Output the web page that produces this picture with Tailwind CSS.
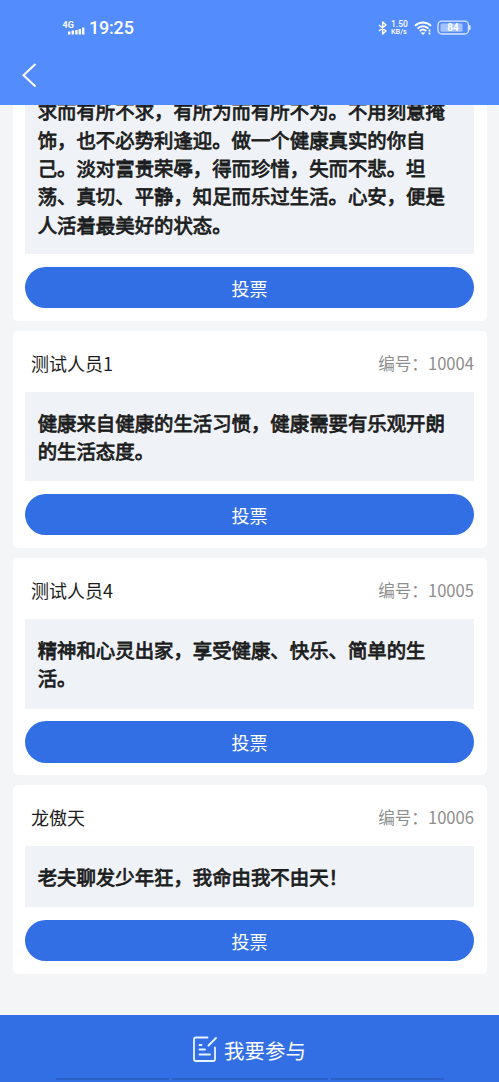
<!DOCTYPE html>
<html lang="zh-CN">
<head>
<meta charset="utf-8">
<meta name="viewport" content="width=device-width, initial-scale=1">
<title>投票</title>
<script src="https://cdn.jsdelivr.net/npm/@tailwindcss/browser@4"></script>
</head>
<body class="flex h-[1082px] w-[499px] flex-col overflow-hidden bg-[#f3f5f7] font-['Noto_Sans_CJK_SC',sans-serif] text-[#1b1d20]">
  <header class="flex h-[105px] shrink-0 flex-col bg-[#528cfd] text-white">
    <div class="flex h-[55px] items-center justify-between pl-[62px] pr-[28px]">
      <div class="flex items-center">
        <svg class="h-[18px] w-[24px]" viewBox="0 0 24 18" fill="#fff">
          <text x="0.500" y="8.500" font-family="Roboto, sans-serif" font-size="9" font-weight="700">4G</text>
          <rect x="6" y="12.500" width="2.400" height="3"/><rect x="9.600" y="11.500" width="2.400" height="4"/><rect x="13.200" y="11" width="2.400" height="4.500"/><rect x="16.600" y="10" width="2.400" height="5.500"/><rect x="20" y="8.500" width="2.400" height="7"/>
        </svg>
        <span class="ml-[3px] font-['Roboto',sans-serif] text-[18px] leading-[20px] font-medium tracking-[-0.200px]">19:25</span>
      </div>
      <div class="flex items-center">
        <svg class="h-[14px] w-[10px]" viewBox="0 0 10 14" fill="none" stroke="#fff" stroke-width="1.500" stroke-linejoin="round"><path d="M1 4l7 6-3.300 3V1L8 4 1 10"/></svg>
        <div class="ml-[3px] w-[18px] font-['Roboto',sans-serif] font-medium"><div class="text-[8.500px] leading-[8px]">1.50</div><div class="text-[7.300px] leading-[7px]">KB/s</div></div>
        <svg class="ml-[5px] h-[14px] w-[18px]" viewBox="0 0 18 14" fill="none" stroke="#fff" stroke-width="1.900"><path d="M1 4.800C5.500.3 12.500.3 17 4.800"/><path d="M3.500 7.600c3.200-3.100 7.800-3.100 11 0"/><path d="M5.700 10.100c2-1.900 4.600-1.900 6.600 0"/><path d="M6.500 11.500h5L9 14z" fill="#fff" stroke="none"/><path d="M15.500 8.500v2M15.500 11.500v2" stroke-width="1.800"/></svg>
        <svg class="ml-[5px] h-[15px] w-[34px]" viewBox="0 0 34 15"><rect x="1" y="1.200" width="30.500" height="12.800" rx="3.800" fill="none" stroke="#dbe8ff" stroke-width="1.300"/><rect x="3.500" y="3.500" width="22" height="8.200" rx="1.500" fill="#a3c3ff"/><path d="M32.800 5.200v4.600" stroke="#dbe8ff" stroke-width="1.600"/><text x="16" y="11.200" text-anchor="middle" font-family="Roboto, sans-serif" font-size="10" font-weight="700" fill="#fff">84</text></svg>
      </div>
    </div>
    <svg class="mt-[8px] ml-[22px] h-[25px] w-[15px]" viewBox="0 0 15 25" fill="none" stroke="#fff" stroke-width="2"><path d="M13.500 1L1.500 12.200l12 11.300"/></svg>
  </header>

  <main class="flex h-[910px] shrink-0 flex-col justify-end gap-[10px] overflow-hidden px-[12.500px] pb-[41.200px]">
    <section class="shrink-0 rounded-[5px] bg-white p-[12.500px]">
      <div class="bg-[#eff2f7] px-[12.700px] py-[15.500px] text-[19.400px] leading-[28.300px] font-normal [-webkit-text-stroke:0.800px_#1b1d20]">求而有所不求，有所为而有所不为。不用刻意掩<br>饰，也不必势利逢迎。做一个健康真实的你自<br>己。淡对富贵荣辱，得而珍惜，失而不悲。坦<br>荡、真切、平静，知足而乐过生活。心安，便是<br>人活着最美好的状态。</div>
      <button class="mt-[12.500px] block h-[41.500px] w-full rounded-full bg-[#326fe5] pt-[1px] text-[18px] text-white">投票</button>
    </section>
    <section class="shrink-0 rounded-[5px] bg-white px-[12.500px] pb-[12.500px]">
      <div class="flex h-[61px] items-center justify-between pt-[4px] pl-[6px]"><span class="text-[18px]">测试人员1</span><span class="text-[16.600px] text-[#8e8e8e]">编号：10004</span></div>
      <div class="bg-[#eff2f7] px-[12.700px] pt-[17px] pb-[16px] text-[19.400px] leading-[28.300px] font-normal [-webkit-text-stroke:0.800px_#1b1d20]">健康来自健康的生活习惯，健康需要有乐观开朗<br>的生活态度。</div>
      <button class="mt-[12.500px] block h-[41.500px] w-full rounded-full bg-[#326fe5] pt-[1px] text-[18px] text-white">投票</button>
    </section>
    <section class="shrink-0 rounded-[5px] bg-white px-[12.500px] pb-[12.500px]">
      <div class="flex h-[61px] items-center justify-between pt-[4px] pl-[6px]"><span class="text-[18px]">测试人员4</span><span class="text-[16.600px] text-[#8e8e8e]">编号：10005</span></div>
      <div class="bg-[#eff2f7] px-[12.700px] pt-[17px] pb-[16px] text-[19.400px] leading-[28.300px] font-normal [-webkit-text-stroke:0.800px_#1b1d20]">精神和心灵出家，享受健康、快乐、简单的生<br>活。</div>
      <button class="mt-[12.500px] block h-[41.500px] w-full rounded-full bg-[#326fe5] pt-[1px] text-[18px] text-white">投票</button>
    </section>
    <section class="shrink-0 rounded-[5px] bg-white px-[12.500px] pb-[12.500px]">
      <div class="flex h-[61px] items-center justify-between pt-[4px] pl-[6px]"><span class="text-[18px]">龙傲天</span><span class="text-[16.600px] text-[#8e8e8e]">编号：10006</span></div>
      <div class="bg-[#eff2f7] px-[12.700px] pt-[17px] pb-[16px] text-[19.400px] leading-[28.300px] font-normal [-webkit-text-stroke:0.800px_#1b1d20]">老夫聊发少年狂，我命由我不由天！</div>
      <button class="mt-[12.500px] block h-[41.500px] w-full rounded-full bg-[#326fe5] pt-[1px] text-[18px] text-white">投票</button>
    </section>
  </main>

  <footer class="flex h-[67px] shrink-0 flex-col items-center bg-[#326fe5] text-white">
    <div class="flex h-[63px] items-center pt-[5px] pr-[1px]">
      <svg class="h-[27px] w-[25px]" viewBox="0 0 25 27" fill="none" stroke="#e8f4ff" stroke-width="1.800" stroke-linecap="round" stroke-linejoin="round"><path d="M15.500 1.500H4Q2 1.500 2 3.500v19.500q0 2 2 2h17q2 0 2-2V11.500M16.500 9.500l7.500-7.500M7.500 9h2M7.500 13.500h5.500M7.500 18.500h10.500"/></svg>
      <span class="ml-[7px] pt-[2px] text-[20.500px] leading-[30px]">我要参与</span>
    </div>
    <div class="flex h-[2px] w-[388px] gap-[3px]"><div class="w-[113px] bg-[#2b60c6]"></div><div class="flex-1 bg-[#2b60c6]"></div><div class="w-[113px] bg-[#2b60c6]"></div></div>
  </footer>
</body>
</html>
